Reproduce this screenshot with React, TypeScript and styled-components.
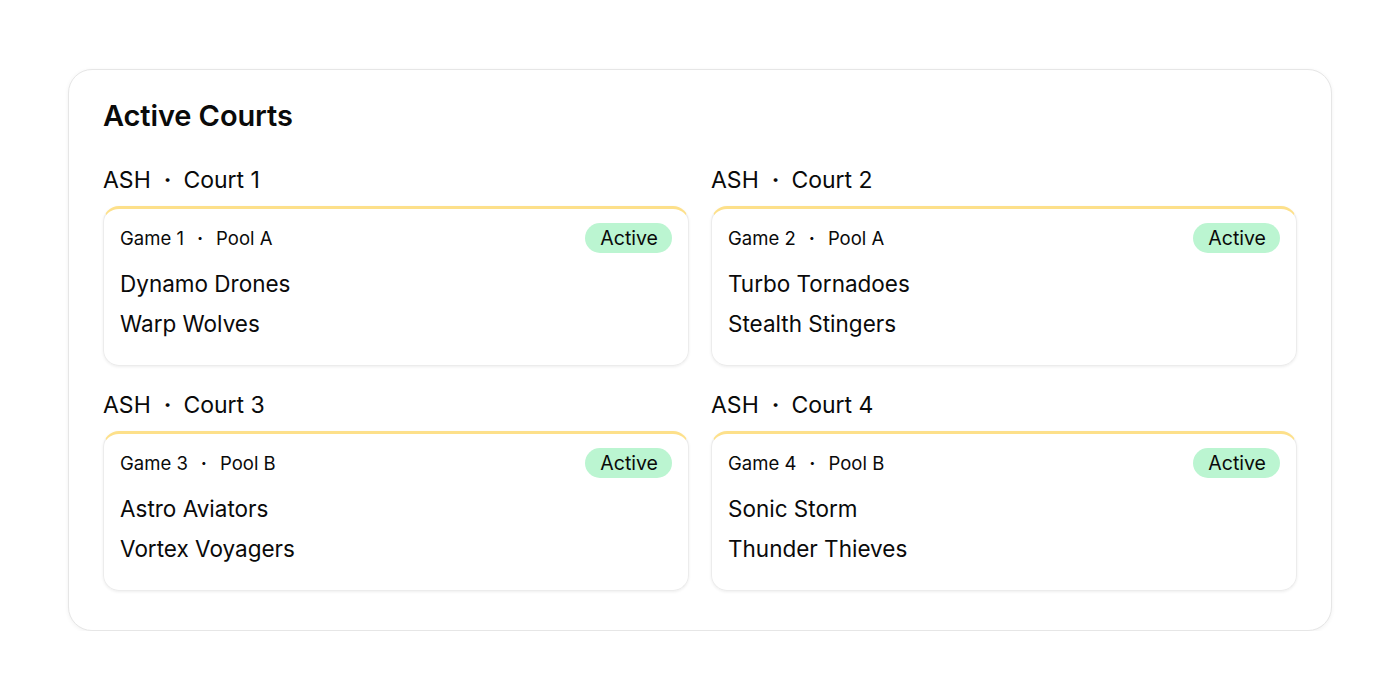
import React from "react";
import styled, { createGlobalStyle } from "styled-components";

const GlobalStyle = createGlobalStyle`
  html, body { margin: 0; padding: 0; background: #ffffff; }
  body { font-family: "Inter", "Roboto", sans-serif; color: #0a0a0a; }
  * { box-sizing: border-box; }
`;

const Page = styled.div`
  padding: 69px 68px 0 68px;
`;

const Panel = styled.section`
  border: 1px solid #e6e6e6;
  border-radius: 24px;
  background: #fff;
  box-shadow: 0 1px 4px rgba(0, 0, 0, 0.06);
  padding: 29px 34px 39px 34px;
`;

const Title = styled.h2`
  margin: 0 0 34px 0;
  font-size: 29px;
  font-weight: 600;
  line-height: 34px;
  letter-spacing: -0.1px;
`;

const Grid = styled.div`
  display: grid;
  grid-template-columns: 1fr 1fr;
  column-gap: 22px;
  row-gap: 26px;
`;

const Court = styled.div`
  display: flex;
  flex-direction: column;
`;

const CourtLabel = styled.div`
  font-size: 23px;
  line-height: 26px;
  margin-bottom: 13px;
  white-space: nowrap;
`;

const Dot = styled.span`
  margin: 0 12px 0 13px;
  font-weight: 700;
`;

const Card = styled.div`
  border: 1px solid #ececec;
  border-top: 3px solid #fde08a;
  border-radius: 16px;
  box-shadow: 0 1px 3px rgba(0, 0, 0, 0.07);
  padding: 14px 16px 21px 16px;
  display: flex;
  flex-direction: column;
`;

const CardHeader = styled.div`
  display: flex;
  align-items: center;
  justify-content: space-between;
  margin-bottom: 11px;
`;

const Meta = styled.div`
  font-size: 18.5px;
  line-height: 22px;
  white-space: nowrap;
`;

const SmallDot = styled.span`
  margin: 0 13px 0 13px;
  font-weight: 700;
`;

const Badge = styled.span`
  background: #bbf5d1;
  border-radius: 999px;
  font-size: 19.5px;
  line-height: 30px;
  padding: 0 14px 0 15px;
`;

const Team = styled.div`
  font-size: 22.5px;
  line-height: 40px;
`;

const courts = [
  { court: 1, game: 1, pool: "A", teams: ["Dynamo Drones", "Warp Wolves"] },
  { court: 2, game: 2, pool: "A", teams: ["Turbo Tornadoes", "Stealth Stingers"] },
  { court: 3, game: 3, pool: "B", teams: ["Astro Aviators", "Vortex Voyagers"] },
  { court: 4, game: 4, pool: "B", teams: ["Sonic Storm", "Thunder Thieves"] },
];

export default function App() {
  return (
    <>
      <GlobalStyle />
      <Page>
        <Panel>
          <Title>Active Courts</Title>
          <Grid>
            {courts.map((c) => (
              <Court key={c.court}>
                <CourtLabel>
                  ASH<Dot>·</Dot>Court {c.court}
                </CourtLabel>
                <Card>
                  <CardHeader>
                    <Meta>
                      Game {c.game}
                      <SmallDot>·</SmallDot>Pool {c.pool}
                    </Meta>
                    <Badge>Active</Badge>
                  </CardHeader>
                  {c.teams.map((t) => (
                    <Team key={t}>{t}</Team>
                  ))}
                </Card>
              </Court>
            ))}
          </Grid>
        </Panel>
      </Page>
    </>
  );
}
